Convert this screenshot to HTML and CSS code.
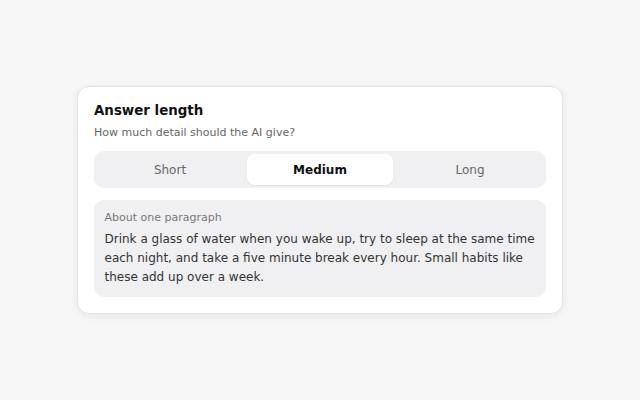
FILE: index.html
```html
<!DOCTYPE html>
<html lang="en">
<head>
<meta charset="utf-8">
<title>Answer length</title>
<link rel="stylesheet" href="styles.css">
</head>
<body>
<main class="page">
  <section class="card">
    <h1 class="title">Answer length</h1>
    <p class="subtitle">How much detail should the AI give?</p>
    <div class="segmented" role="tablist">
      <button class="seg" role="tab">Short</button>
      <button class="seg active" role="tab" aria-selected="true">Medium</button>
      <button class="seg" role="tab">Long</button>
    </div>
    <div class="preview">
      <div class="preview-label">About one paragraph</div>
      <p class="preview-text">Drink a glass of water when you wake up, try to sleep at the same time each night, and take a five minute break every hour. Small habits like these add up over a week.</p>
    </div>
  </section>
</main>
</body>
</html>
```

FILE: styles.css
```css
* { box-sizing: border-box; }
html, body {
  margin: 0;
  height: 100%;
}
body {
  background: #f7f7f7;
  font-family: "DejaVu Sans", Verdana, sans-serif;
  color: #222;
}
.page {
  height: 100%;
  display: flex;
  align-items: center;
  justify-content: center;
}
.card {
  width: 486px;
  background: #ffffff;
  border: 1px solid #e6e6e6;
  border-radius: 12px;
  box-shadow: 0 2px 8px rgba(0, 0, 0, 0.07);
  padding: 16px;
}
.title {
  margin: 0;
  font-size: 13.4px;
  line-height: 15px;
  font-weight: 700;
  color: #111;
}
.subtitle {
  margin: 7px 0 10px;
  font-size: 11px;
  line-height: 16px;
  color: #666;
}
.segmented {
  display: grid;
  grid-template-columns: 1fr 1fr 1fr;
  gap: 4px;
  padding: 3px;
  background: #f0f0f2;
  border-radius: 10px;
}
.seg {
  font-family: inherit;
  font-size: 12px;
  height: 31px;
  padding: 0;
  border: 0;
  border-radius: 8px;
  background: transparent;
  color: #666;
  cursor: pointer;
}
.seg.active {
  background: #ffffff;
  color: #111;
  font-weight: 700;
  box-shadow: 0 1px 2px rgba(0, 0, 0, 0.06);
}
.preview {
  margin-top: 12px;
  background: #f0f0f2;
  border-radius: 10px;
  padding: 10px 10px 10px 10.5px;
}
.preview-label {
  font-size: 11px;
  line-height: 16px;
  color: #777;
}
.preview-text {
  margin: 3.5px 0 0;
  font-size: 12px;
  line-height: 19px;
  color: #333;
}
```
